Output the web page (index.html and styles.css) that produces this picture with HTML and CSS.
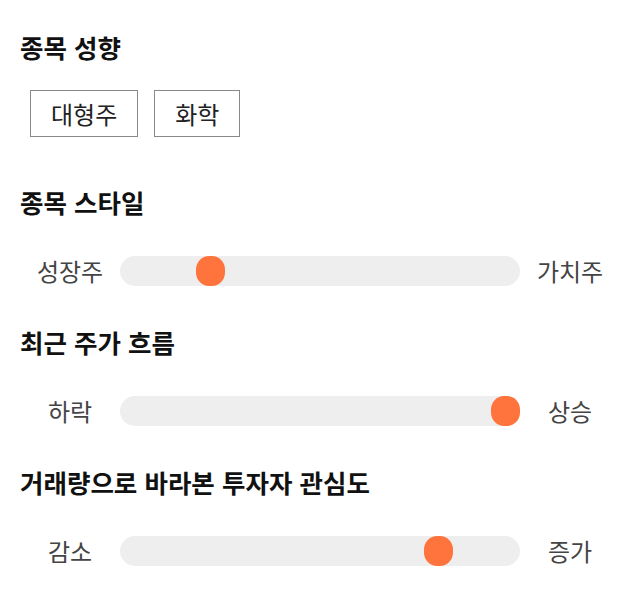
FILE: index.html
```html
<!DOCTYPE html>
<html lang="ko">
<head>
<meta charset="utf-8">
<link rel="stylesheet" href="styles.css">
</head>
<body>
<main class="page">
  <section class="section">
    <h2 class="title">종목 성향</h2>
    <div class="chips">
      <span class="chip">대형주</span>
      <span class="chip">화학</span>
    </div>
  </section>
  <section class="section">
    <h2 class="title">종목 스타일</h2>
    <div class="scale">
      <span class="label">성장주</span>
      <div class="track"><span class="thumb" style="--v:0.205"></span></div>
      <span class="label">가치주</span>
    </div>
  </section>
  <section class="section">
    <h2 class="title">최근 주가 흐름</h2>
    <div class="scale">
      <span class="label">하락</span>
      <div class="track"><span class="thumb" style="--v:1"></span></div>
      <span class="label">상승</span>
    </div>
  </section>
  <section class="section">
    <h2 class="title">거래량으로 바라본 투자자 관심도</h2>
    <div class="scale">
      <span class="label">감소</span>
      <div class="track"><span class="thumb" style="--v:0.82"></span></div>
      <span class="label">증가</span>
    </div>
  </section>
</main>
</body>
</html>
```
FILE: styles.css
```css
* { box-sizing: border-box; }
html, body { margin: 0; padding: 0; background: #fff; }
body {
  font-family: "Noto Sans CJK KR", "Noto Sans", sans-serif;
  color: #111;
}
.page {
  padding: 30px 20px 0 20px;
  display: flex;
  flex-direction: column;
  gap: 39px;
}
.section { display: flex; flex-direction: column; }
.title {
  margin: 0;
  font-size: 25.5px;
  font-weight: 700;
  line-height: 34px;
  color: #111;
}
.chips {
  display: flex;
  gap: 16px;
  margin: 26px 0 9px 10px;
}
.chip {
  border: 1px solid #888;
  padding: 6px 20px;
  font-size: 24px;
  line-height: 33px;
  color: #222;
}
.scale {
  margin-top: 37px;
  display: grid;
  grid-template-columns: 100px 1fr 100px;
  align-items: center;
  height: 30px;
}
.label {
  text-align: center;
  font-size: 24px;
  line-height: 30px;
  color: #444;
}
.track {
  position: relative;
  height: 30px;
  background: #eeeeee;
  border-radius: 15px;
}
.thumb {
  position: absolute;
  top: 0;
  left: calc((100% - 29px) * var(--v));
  width: 29px;
  height: 30px;
  background: #ff743d;
  border-radius: 45%;
}
```
